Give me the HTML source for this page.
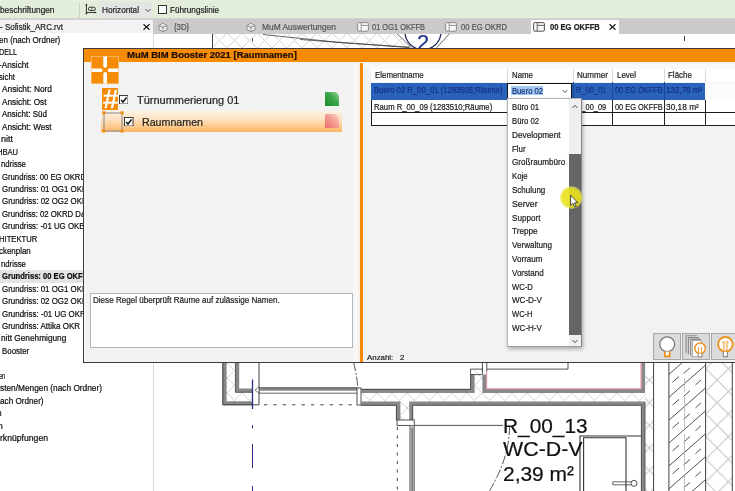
<!DOCTYPE html><html><head><meta charset="utf-8"><title>MuM BIM Booster 2021</title><style>
html,body{margin:0;padding:0}html{width:735px;height:491px;overflow:hidden}#clip{position:absolute;left:0;top:0;width:735px;height:491px;overflow:hidden}body{width:735px;height:491px;overflow:hidden;background:#fff;position:relative;font-family:"Liberation Sans",sans-serif}
.t{position:absolute;white-space:nowrap;transform-origin:0 50%;display:block;-webkit-text-stroke:0.2px currentColor}
#all{position:absolute;left:0;top:0;width:735px;height:491px;filter:blur(0.45px)}
</style></head><body><div id="clip"><div id="all">
<svg style="position:absolute;left:0;top:0" width="745" height="501" viewBox="0 0 745 501">
<defs>
<pattern id="xh" width="22.6" height="22.6" patternUnits="userSpaceOnUse" x="16.5" y="18.5">
<path d="M0 0L22.6 22.6M22.6 0L0 22.6" stroke="#c4c4c4" stroke-width="1" fill="none"/></pattern>
<pattern id="xh2" width="15" height="15" patternUnits="userSpaceOnUse" x="2" y="3">
<path d="M0 0L15 15M15 0L0 15" stroke="#d0d0d0" stroke-width="0.9" fill="none"/></pattern>
<clipPath id="ct"><rect x="153" y="33.5" width="582" height="16"/></clipPath>
<clipPath id="cc"><rect x="669" y="362" width="36.6" height="140"/></clipPath>
</defs>
<g clip-path="url(#ct)">
<path d="M212.5 33.5H396.9L411.5 47.8H212.5Z" fill="url(#xh2)"/>
<path d="M212.5 33V48" stroke="#404040" stroke-width="1" fill="none"/>
<path d="M263 34.5L340 42.5L409.4 47.2M300 39.5L380 45.4L409.4 47.6" stroke="#404040" stroke-width="0.8" fill="none"/>
<path d="M252.5 38.5V41.5M684.5 35.8V41" stroke="#404040" stroke-width="1" fill="none"/>
<path d="M396.9 33.5L411.5 47.8M449.6 33.5L436.6 47.8" stroke="#404040" stroke-width="0.8" fill="none"/>
<circle cx="423" cy="31.8" r="18" fill="none" stroke="#222c5c" stroke-width="1.3"/>
</g>
<rect x="223" y="362" width="13" height="43" fill="url(#xh2)"/>
<rect x="236" y="392" width="17" height="13" fill="url(#xh2)"/>
<rect x="361" y="392.5" width="285" height="10" fill="url(#xh2)"/>
<rect x="474" y="370" width="9" height="22" fill="url(#xh2)"/>
<rect x="400" y="402" width="10" height="18" fill="url(#xh2)"/>
<rect x="645" y="362" width="8.6" height="140" fill="url(#xh)"/>
<rect x="705.6" y="362" width="26.7" height="140" fill="url(#xh)"/>
<path d="M224.6 362V403.2H252.5" stroke="#888888" stroke-width="4" fill="none"/>
<path d="M222.8 362V404.8H259V362" stroke="#404040" stroke-width="1" fill="none"/>
<path d="M237.3 362V390.4H252.5" stroke="#888888" stroke-width="3.8" fill="none"/>
<path d="M235.4 362V392.3H253" stroke="#404040" stroke-width="0.8" fill="none"/>
<path d="M259 389.3H357" stroke="#888888" stroke-width="3" fill="none"/>
<path d="M259 387.7H357M259 393.2H357" stroke="#404040" stroke-width="0.8" fill="none"/>
<path d="M255 390l4 -3v6z" fill="#fff" stroke="#404040" stroke-width="0.7"/>
<path d="M252.5 379.5V409" stroke="#2a2a90" stroke-width="1.3" fill="none"/>
<path d="M252.5 425V428.5M252.5 444V468M252.5 486V501" stroke="#2a2a90" stroke-width="1" fill="none"/>
<path d="M264 404.8H357" stroke="#404040" stroke-width="1" stroke-dasharray="3.2 6.2" fill="none"/>
<path d="M353.5 362Q357 376 357.8 388" stroke="#404040" stroke-width="0.9" stroke-dasharray="9 2 2 2" fill="none"/>
<rect x="357" y="388" width="4" height="17" fill="#fff" stroke="#404040" stroke-width="0.9"/>
<path d="M361 391H472.6V374.6" stroke="#888888" stroke-width="4" fill="none"/>
<path d="M361 389.3H470.6V369.1H482.4V374.6H470.6" stroke="#404040" stroke-width="0.9" fill="none"/>
<path d="M361 403.4H398.4V420" stroke="#888888" stroke-width="4" fill="none"/>
<path d="M411 420V403.4H643.2V501" stroke="#888888" stroke-width="3.6" fill="none"/>
<path d="M361 405.3H396.4V420.6M412.7 420.6V405.3H641.4V501" stroke="#404040" stroke-width="0.9" fill="none"/>
<path d="M645 401.8V501" stroke="#404040" stroke-width="0.8" fill="none"/>
<path d="M484.3 374.6V391H643.2V362" stroke="#888888" stroke-width="3.8" fill="none"/>
<path d="M486.6 371V388.8H641V362" stroke="#e8939e" stroke-width="1.1" fill="none"/>
<path d="M482.4 362V371.3M486.8 362V371.3" stroke="#404040" stroke-width="0.9" fill="none"/>
<path d="M486.8 369.1H568V362" stroke="#404040" stroke-width="0.9" fill="none"/>
<rect x="397.1" y="420" width="17.2" height="5.4" fill="#fff" stroke="#404040" stroke-width="0.9"/>
<path d="M412.1 425.6V501" stroke="#bdbdbd" stroke-width="3.6" fill="none"/>
<path d="M409.9 425.6V501M412.1 428V501M414.3 425.6V501" stroke="#404040" stroke-width="0.8" fill="none"/>
<path d="M414.3 425.4H503" stroke="#404040" stroke-width="0.9" fill="none"/>
<path d="M397.3 427V501" stroke="#404040" stroke-width="1" stroke-dasharray="3 5.5" fill="none"/>
<path d="M509.6 426Q509.6 462 483 501" stroke="#404040" stroke-width="0.9" stroke-dasharray="9 2 2 2" fill="none"/>
<path d="M580 501V436H641.6M583.6 501V437.8H626V501" stroke="#333" stroke-width="1.1" fill="none"/>
<path d="M612.8 481.8H631M612.8 484.8H631M612.8 481.8V484.8" stroke="#404040" stroke-width="0.8" fill="none"/>
<circle cx="634" cy="483.3" r="3" fill="#fff" stroke="#404040" stroke-width="0.9"/>
<path d="M653.6 362V501M668.9 362V501M705.6 362V501M732.3 362V501" stroke="#404040" stroke-width="1" fill="none"/>
<g clip-path="url(#cc)"><path d="M669 351.4L705.6 319.2M669 374.3L705.6 342.1M669 397.2L705.6 365.0M669 420.1L705.6 387.9M669 443.0L705.6 410.8M669 465.9L705.6 433.7M669 488.8L705.6 456.6M669 511.7L705.6 479.5M669 534.6L705.6 502.4" stroke="#404040" stroke-width="0.9" fill="none"/>
<path d="M672.5 359.3L679 353.6M683.6 350.6L690 344.9M695.5 339.1L701 334.2M672.5 382.2L679 376.5M683.6 373.5L690 367.8M695.5 362.0L701 357.1M672.5 405.1L679 399.4M683.6 396.4L690 390.7M695.5 384.9L701 380.0M672.5 428.0L679 422.3M683.6 419.3L690 413.6M695.5 407.8L701 402.9M672.5 450.9L679 445.2M683.6 442.2L690 436.5M695.5 430.7L701 425.8M672.5 473.8L679 468.1M683.6 465.1L690 459.4M695.5 453.6L701 448.7M672.5 496.7L679 491.0M683.6 488.0L690 482.3M695.5 476.5L701 471.6M672.5 519.6L679 513.9M683.6 510.9L690 505.2M695.5 499.4L701 494.5M672.5 542.5L679 536.8M683.6 533.8L690 528.1M695.5 522.3L701 517.4" stroke="#404040" stroke-width="0.9" fill="none"/>
<path d="M684.5 378V392M684.5 397V428M684.5 434V470M684.5 476V501" stroke="#b8b8c0" stroke-width="0.9" fill="none"/></g>
</svg>
<span class="t" style="left:502.60px;top:414.40px;font-size:20px;line-height:24.00px;color:#111;transform:scaleX(1.0420);">R_00_13</span>
<span class="t" style="left:502.80px;top:436.90px;font-size:20px;line-height:24.00px;color:#111;transform:scaleX(1.0694);">WC-D-V</span>
<span class="t" style="left:502.60px;top:461.90px;font-size:20px;line-height:24.00px;color:#111;transform:scaleX(1.0470);">2,39 m²</span>
<span class="t" style="left:416.60px;top:30.30px;font-size:22px;line-height:26.40px;color:#1c2f8c;transform:scaleX(0.9959);clip-path:inset(3px 0 0 0);">2</span>
<div style="position:absolute;left:-6.00px;top:19.50px;width:160.00px;height:481.50px;background:#fff;border-right:1.4px solid #d9d9d9;box-sizing:border-box;"></div>
<div style="position:absolute;left:-6.00px;top:270.20px;width:158.00px;height:12.60px;background:#e4e4e4;"></div>
<span class="t" style="left:-1.00px;top:35.62px;font-size:8.3px;line-height:9.96px;color:#0c0c0c;transform:scaleX(0.9701);">en (nach Ordner)</span>
<span class="t" style="left:-1.40px;top:48.07px;font-size:8.3px;line-height:9.96px;color:#0c0c0c;transform:scaleX(0.8668);">DELL</span>
<span class="t" style="left:-0.80px;top:60.52px;font-size:8.3px;line-height:9.96px;color:#0c0c0c;transform:scaleX(0.9872);">-Ansicht</span>
<span class="t" style="left:-1.00px;top:72.97px;font-size:8.3px;line-height:9.96px;color:#0c0c0c;transform:scaleX(0.9260);">sicht</span>
<span class="t" style="left:1.50px;top:85.42px;font-size:8.3px;line-height:9.96px;color:#0c0c0c;transform:scaleX(1.0038);">Ansicht: Nord</span>
<span class="t" style="left:1.50px;top:97.87px;font-size:8.3px;line-height:9.96px;color:#0c0c0c;transform:scaleX(0.9948);">Ansicht: Ost</span>
<span class="t" style="left:1.50px;top:110.32px;font-size:8.3px;line-height:9.96px;color:#0c0c0c;transform:scaleX(0.9658);">Ansicht: Süd</span>
<span class="t" style="left:1.50px;top:122.77px;font-size:8.3px;line-height:9.96px;color:#0c0c0c;transform:scaleX(0.9787);">Ansicht: West</span>
<span class="t" style="left:1.10px;top:135.22px;font-size:8.3px;line-height:9.96px;color:#0c0c0c;transform:scaleX(1.0742);">nitt</span>
<span class="t" style="left:-3.40px;top:147.67px;font-size:8.3px;line-height:9.96px;color:#0c0c0c;transform:scaleX(0.9149);">HBAU</span>
<span class="t" style="left:1.10px;top:160.12px;font-size:8.3px;line-height:9.96px;color:#0c0c0c;transform:scaleX(0.9308);">ndrisse</span>
<span class="t" style="left:1.50px;top:172.57px;font-size:8.3px;line-height:9.96px;color:#0c0c0c;transform:scaleX(0.9295);">Grundriss: 00 EG OKRD</span>
<span class="t" style="left:1.50px;top:185.02px;font-size:8.3px;line-height:9.96px;color:#0c0c0c;transform:scaleX(0.9529);">Grundriss: 01 OG1 OKFFB</span>
<span class="t" style="left:1.50px;top:197.47px;font-size:8.3px;line-height:9.96px;color:#0c0c0c;transform:scaleX(0.9529);">Grundriss: 02 OG2 OKFFB</span>
<span class="t" style="left:1.50px;top:209.92px;font-size:8.3px;line-height:9.96px;color:#0c0c0c;transform:scaleX(0.9359);">Grundriss: 02 OKRD Dach</span>
<span class="t" style="left:1.50px;top:222.37px;font-size:8.3px;line-height:9.96px;color:#0c0c0c;transform:scaleX(0.9466);">Grundriss: -01 UG OKB</span>
<span class="t" style="left:-1.20px;top:234.82px;font-size:8.3px;line-height:9.96px;color:#0c0c0c;transform:scaleX(0.9205);">HITEKTUR</span>
<span class="t" style="left:-1.20px;top:247.27px;font-size:8.3px;line-height:9.96px;color:#0c0c0c;transform:scaleX(0.9543);">ckenplan</span>
<span class="t" style="left:1.10px;top:259.72px;font-size:8.3px;line-height:9.96px;color:#0c0c0c;transform:scaleX(0.9308);">ndrisse</span>
<span class="t" style="left:1.50px;top:272.17px;font-size:8.3px;line-height:9.96px;color:#0c0c0c;font-weight:bold;transform:scaleX(0.9170);">Grundriss: 00 EG OKFFB</span>
<span class="t" style="left:1.50px;top:284.62px;font-size:8.3px;line-height:9.96px;color:#0c0c0c;transform:scaleX(0.9529);">Grundriss: 01 OG1 OKFFB</span>
<span class="t" style="left:1.50px;top:297.07px;font-size:8.3px;line-height:9.96px;color:#0c0c0c;transform:scaleX(0.9529);">Grundriss: 02 OG2 OKFFB</span>
<span class="t" style="left:1.50px;top:309.52px;font-size:8.3px;line-height:9.96px;color:#0c0c0c;transform:scaleX(0.9563);">Grundriss: -01 UG OKRD</span>
<span class="t" style="left:1.50px;top:321.97px;font-size:8.3px;line-height:9.96px;color:#0c0c0c;transform:scaleX(0.9611);">Grundriss: Attika OKR</span>
<span class="t" style="left:1.10px;top:334.42px;font-size:8.3px;line-height:9.96px;color:#0c0c0c;transform:scaleX(0.9969);">nitt Genehmigung</span>
<span class="t" style="left:2.20px;top:346.87px;font-size:8.3px;line-height:9.96px;color:#0c0c0c;transform:scaleX(0.9513);">Booster</span>
<span class="t" style="left:-0.60px;top:371.77px;font-size:8.3px;line-height:9.96px;color:#0c0c0c;transform:scaleX(0.6714);">en</span>
<span class="t" style="left:0.00px;top:384.22px;font-size:8.3px;line-height:9.96px;color:#0c0c0c;transform:scaleX(1.0008);">sten/Mengen (nach Ordner)</span>
<span class="t" style="left:0.00px;top:396.67px;font-size:8.3px;line-height:9.96px;color:#0c0c0c;transform:scaleX(0.9846);">ach Ordner)</span>
<span class="t" style="left:-2.60px;top:409.12px;font-size:8.3px;line-height:9.96px;color:#0c0c0c;transform:scaleX(0.9946);">n</span>
<span class="t" style="left:-2.40px;top:421.57px;font-size:8.3px;line-height:9.96px;color:#0c0c0c;transform:scaleX(1.0378);">n</span>
<span class="t" style="left:0.00px;top:434.02px;font-size:8.3px;line-height:9.96px;color:#0c0c0c;transform:scaleX(1.0403);">rknüpfungen</span>
<div style="position:absolute;left:-6.00px;top:-6.00px;width:750.00px;height:26.00px;background:#d2d2d2;"></div>
<div style="position:absolute;left:-6.00px;top:-6.00px;width:750.00px;height:24.30px;background:#e3eeda;"></div>
<div style="position:absolute;left:-6.00px;top:-6.00px;width:750.00px;height:7.40px;background:#e8eee3;"></div>
<div style="position:absolute;left:-6.00px;top:19.80px;width:159.00px;height:13.30px;background:#f2f2f2;"></div>
<div style="position:absolute;left:153.00px;top:19.00px;width:592.00px;height:14.50px;background:#cbcbcb;"></div>
<div style="position:absolute;left:531.00px;top:19.60px;width:88.40px;height:14.40px;background:#fff;"></div>
<div style="position:absolute;left:79.00px;top:3.00px;width:1.00px;height:15.00px;background:#c9d2c2;"></div>
<div style="position:absolute;left:99.20px;top:1.90px;width:52.90px;height:15.30px;background:#e3e6e3;"></div>
<svg style="position:absolute;left:84px;top:2px" width="14" height="14" viewBox="0 0 14 14"><path d="M2.4 2.4V11.8M2.4 10.5H12" stroke="#222" stroke-width="0.9" fill="none"/><path d="M1.3 3.6L2.4 1.6L3.5 3.6ZM1.3 10.9L2.4 12.8L3.5 10.9ZM10.8 9.4L12.8 10.5L10.8 11.6Z" fill="#222"/><rect x="4.4" y="5.2" width="7" height="3.3" rx="1.65" fill="none" stroke="#222" stroke-width="0.9"/><path d="M7.9 5.2V8.5" stroke="#222" stroke-width="0.7"/></svg>
<svg style="position:absolute;left:144.5px;top:7.5px" width="6" height="5" viewBox="0 0 6 5"><path d="M0.5 1L3 3.7L5.5 1" stroke="#444" stroke-width="0.9" fill="none"/></svg>
<div style="position:absolute;left:158.20px;top:5.30px;width:8.80px;height:9.00px;background:#fff;border:1px solid #333;box-sizing:border-box;"></div>
<svg style="position:absolute;left:142.5px;top:23.8px" width="7" height="6" viewBox="0 0 7 6"><path d="M0.5 0.3L6.5 5.7M6.5 0.3L0.5 5.7" stroke="#111" stroke-width="1.2" fill="none"/></svg>
<svg style="position:absolute;left:608.7px;top:23.8px" width="7" height="6" viewBox="0 0 7 6"><path d="M0.5 0.3L6.5 5.7M6.5 0.3L0.5 5.7" stroke="#111" stroke-width="1.2" fill="none"/></svg>
<svg style="position:absolute;left:158px;top:21.7px" width="10" height="10" viewBox="0 0 10 10"><path d="M1 3.5L5 1L9 3.5V8L5 9.5L1 8ZM1 3.5L5 5.5L9 3.5M5 5.5V9.5" fill="#eee" stroke="#8a8a8a" stroke-width="0.9"/></svg>
<svg style="position:absolute;left:246px;top:21.7px" width="10" height="10" viewBox="0 0 10 10"><path d="M1 3.5L5 1L9 3.5V8L5 9.5L1 8ZM1 3.5L5 5.5L9 3.5M5 5.5V9.5" fill="#eee" stroke="#8a8a8a" stroke-width="0.9"/></svg>
<svg style="position:absolute;left:356.8px;top:22.0px" width="12" height="10" viewBox="0 0 12 10"><rect x="0.6" y="0.6" width="10.8" height="8.6" rx="1.2" fill="#f6f6f6" stroke="#8a8a8a" stroke-width="1"/><path d="M4.2 3.4H11.4M4.2 0.6V9.2" fill="none" stroke="#8a8a8a" stroke-width="0.9"/></svg>
<svg style="position:absolute;left:444.9px;top:22.0px" width="12" height="10" viewBox="0 0 12 10"><rect x="0.6" y="0.6" width="10.8" height="8.6" rx="1.2" fill="#f6f6f6" stroke="#8a8a8a" stroke-width="1"/><path d="M4.2 3.4H11.4M4.2 0.6V9.2" fill="none" stroke="#8a8a8a" stroke-width="0.9"/></svg>
<svg style="position:absolute;left:533.0px;top:22.0px" width="12" height="10" viewBox="0 0 12 10"><rect x="0.6" y="0.6" width="10.8" height="8.6" rx="1.2" fill="#f6f6f6" stroke="#555" stroke-width="1"/><path d="M4.2 3.4H11.4M4.2 0.6V9.2" fill="none" stroke="#555" stroke-width="0.9"/></svg>
<span class="t" style="left:0.00px;top:5.98px;font-size:8.2px;line-height:9.84px;color:#222;transform:scaleX(1.0145);">beschriftungen</span>
<span class="t" style="left:102.20px;top:5.88px;font-size:8.2px;line-height:9.84px;color:#222;transform:scaleX(1.0034);">Horizontal</span>
<span class="t" style="left:169.70px;top:5.88px;font-size:8.2px;line-height:9.84px;color:#222;transform:scaleX(0.9989);">Führungslinie</span>
<span class="t" style="left:0.00px;top:22.98px;font-size:8.2px;line-height:9.84px;color:#222;transform:scaleX(0.9751);">- Sofistik_ARC.rvt</span>
<span class="t" style="left:173.50px;top:22.58px;font-size:8.2px;line-height:9.84px;color:#555;transform:scaleX(0.9537);">{3D}</span>
<span class="t" style="left:262.00px;top:22.58px;font-size:8.2px;line-height:9.84px;color:#555;transform:scaleX(1.0225);">MuM Auswertungen</span>
<span class="t" style="left:372.00px;top:22.58px;font-size:8.2px;line-height:9.84px;color:#555;transform:scaleX(0.9099);">01 OG1 OKFFB</span>
<span class="t" style="left:461.00px;top:22.58px;font-size:8.2px;line-height:9.84px;color:#555;transform:scaleX(0.9358);">00 EG OKRD</span>
<span class="t" style="left:550.00px;top:22.58px;font-size:8.2px;line-height:9.84px;color:#222;font-weight:bold;transform:scaleX(0.9276);">00 EG OKFFB</span>
<div style="position:absolute;left:82.70px;top:47.90px;width:660.00px;height:314.80px;background:#f2f2f3;border:1px solid #3c3c3c;box-sizing:border-box;"></div>
<div style="position:absolute;left:83.60px;top:48.80px;width:652.00px;height:13.70px;background:#f68c06;"></div>
<div style="position:absolute;left:83.60px;top:62.50px;width:2.00px;height:299.30px;background:#f6f6f6;"></div>
<div style="position:absolute;left:352.60px;top:62.50px;width:5.20px;height:299.30px;background:#f7f7f7;"></div>
<div style="position:absolute;left:357.60px;top:62.50px;width:2.50px;height:299.30px;background:#f7eee6;"></div>
<div style="position:absolute;left:360.10px;top:62.50px;width:3.10px;height:299.30px;background:#f68c06;"></div>
<svg style="position:absolute;left:90.8px;top:55.9px" width="28" height="28" viewBox="-0.5 -0.5 28 28"><rect x="-0.5" y="-0.5" width="28" height="28" fill="#fbd9b0"/><rect width="27" height="27" fill="#f68c06"/><path d="M11.8 0H15.5V9.6Q15.5 11.4 13.65 11.4Q11.8 11.4 11.8 9.6ZM11.8 27H15.5V17.4Q15.5 15.6 13.65 15.6Q11.8 15.6 11.8 17.4ZM0 11.9V15.5H9.4Q11.2 15.5 11.2 13.7Q11.2 11.9 9.4 11.9ZM27 11.9V15.5H17.9Q16.1 15.5 16.1 13.7Q16.1 11.9 17.9 11.9Z" fill="#fff"/></svg>
<div style="position:absolute;left:101.50px;top:88.20px;width:16.80px;height:21.90px;background:#f68c06;"></div>
<span style="position:absolute;left:101.5px;top:86.5px;width:17px;text-align:center;font-size:25px;line-height:25px;color:#fff;font-style:italic;transform:scaleX(1.1);-webkit-text-stroke:0.5px #fff;font-family:'Liberation Sans',sans-serif">#</span>
<svg style="position:absolute;left:118.90px;top:94.60px" width="9.5" height="9.5" viewBox="0 0 10 10"><rect x="0.5" y="0.5" width="9" height="9" fill="#fff" stroke="#333" stroke-width="1"/><path d="M2.2 5.2L4.2 7.4L7.9 2.6" fill="none" stroke="#111" stroke-width="1.5"/></svg>
<div style="position:absolute;left:101.00px;top:110.60px;width:241.00px;height:21.60px;background:linear-gradient(#fff3e4 0%,#fde2c0 40%,#fcc98a 75%,#fbb562 100%);"></div>
<svg style="position:absolute;left:101.5px;top:110.6px" width="22" height="22" viewBox="0 0 22 22"><rect x="2" y="2" width="18" height="18" fill="none" stroke="#9a989a" stroke-width="1.2"/><rect x="0.3" y="0.3" width="3" height="3" fill="#f68c06"/><rect x="18.6" y="0.3" width="3" height="3" fill="#f68c06"/><rect x="0.3" y="18.6" width="3" height="3" fill="#f68c06"/><rect x="18.6" y="18.6" width="3" height="3" fill="#f68c06"/></svg>
<svg style="position:absolute;left:124.30px;top:116.80px" width="9.5" height="9.5" viewBox="0 0 10 10"><rect x="0.5" y="0.5" width="9" height="9" fill="#fff" stroke="#333" stroke-width="1"/><path d="M2.2 5.2L4.2 7.4L7.9 2.6" fill="none" stroke="#111" stroke-width="1.5"/></svg>
<div style="position:absolute;left:324.90px;top:92.30px;width:14.10px;height:13.70px;background:linear-gradient(225deg,#9ad49a,#3aa648 45%,#1c8a2c);border-radius:0 5px 0 0;"></div>
<div style="position:absolute;left:324.90px;top:114.30px;width:14.10px;height:13.80px;background:linear-gradient(225deg,#fbd6cc,#f59a90 50%,#ee6c6c);border-radius:0 5px 0 0;"></div>
<div style="position:absolute;left:89.90px;top:293.20px;width:263.20px;height:55.20px;background:#fff;border:1px solid #b4b4bc;box-sizing:border-box;"></div>
<div style="position:absolute;left:363.40px;top:62.50px;width:380.00px;height:6.70px;background:#f8f8f8;"></div>
<div style="position:absolute;left:370.70px;top:69.20px;width:375.00px;height:13.00px;background:#fff;"></div>
<div style="position:absolute;left:507.00px;top:69.20px;width:1.00px;height:13.00px;background:#dadada;"></div>
<div style="position:absolute;left:572.90px;top:69.20px;width:1.00px;height:13.00px;background:#dadada;"></div>
<div style="position:absolute;left:611.70px;top:69.20px;width:1.00px;height:13.00px;background:#dadada;"></div>
<div style="position:absolute;left:663.90px;top:69.20px;width:1.00px;height:13.00px;background:#dadada;"></div>
<div style="position:absolute;left:704.70px;top:69.20px;width:1.00px;height:13.00px;background:#dadada;"></div>
<div style="position:absolute;left:370.70px;top:82.50px;width:334.80px;height:17.20px;background:#2a61ba;"></div>
<div style="position:absolute;left:572.90px;top:82.20px;width:1.00px;height:17.30px;background:#1d4794;"></div>
<div style="position:absolute;left:611.70px;top:82.20px;width:1.00px;height:17.30px;background:#1d4794;"></div>
<div style="position:absolute;left:663.90px;top:82.20px;width:1.00px;height:17.30px;background:#1d4794;"></div>
<div style="position:absolute;left:705.00px;top:82.50px;width:31.00px;height:17.20px;background:#fbfbfb;"></div>
<div style="position:absolute;left:370.70px;top:99.60px;width:370.00px;height:26.20px;background:#fff;border:1px solid #1c1c1c;border-top:none;border-bottom-width:1.3px;box-sizing:border-box;"></div>
<div style="position:absolute;left:370.70px;top:112.10px;width:375.00px;height:1.00px;background:#1c1c1c;"></div>
<div style="position:absolute;left:507.00px;top:99.50px;width:1.00px;height:26.00px;background:#222;"></div>
<div style="position:absolute;left:572.90px;top:99.50px;width:1.00px;height:26.00px;background:#222;"></div>
<div style="position:absolute;left:611.70px;top:99.50px;width:1.00px;height:26.00px;background:#222;"></div>
<div style="position:absolute;left:663.90px;top:99.50px;width:1.00px;height:26.00px;background:#222;"></div>
<div style="position:absolute;left:704.90px;top:99.50px;width:1.00px;height:26.00px;background:#222;"></div>
<span class="t" style="left:126.60px;top:50.44px;font-size:8.6px;line-height:10.32px;color:#1d0c00;font-weight:bold;transform:scaleX(1.1043);">MuM BIM Booster 2021 [Raumnamen]</span>
<span class="t" style="left:136.60px;top:94.24px;font-size:10.6px;line-height:12.72px;color:#222;transform:scaleX(1.0352);">Türnummerierung 01</span>
<span class="t" style="left:142.00px;top:116.04px;font-size:10.6px;line-height:12.72px;color:#222;transform:scaleX(1.0057);">Raumnamen</span>
<span class="t" style="left:93.30px;top:296.28px;font-size:8.2px;line-height:9.84px;color:#222;transform:scaleX(0.9861);">Diese Regel überprüft Räume auf zulässige Namen.</span>
<span class="t" style="left:367.00px;top:353.40px;font-size:8px;line-height:9.60px;color:#222;transform:scaleX(0.9855);">Anzahl:</span>
<span class="t" style="left:400.40px;top:353.40px;font-size:8px;line-height:9.60px;color:#222;transform:scaleX(0.9881);">2</span>
<span class="t" style="left:375.30px;top:70.14px;font-size:8.6px;line-height:10.32px;color:#222;transform:scaleX(0.9183);">Elementname</span>
<span class="t" style="left:511.50px;top:70.14px;font-size:8.6px;line-height:10.32px;color:#222;transform:scaleX(0.9155);">Name</span>
<span class="t" style="left:577.30px;top:70.14px;font-size:8.6px;line-height:10.32px;color:#222;transform:scaleX(0.9407);">Nummer</span>
<span class="t" style="left:616.50px;top:70.14px;font-size:8.6px;line-height:10.32px;color:#222;transform:scaleX(0.9247);">Level</span>
<span class="t" style="left:667.70px;top:70.14px;font-size:8.6px;line-height:10.32px;color:#222;transform:scaleX(0.9265);">Fläche</span>
<span class="t" style="left:373.50px;top:85.14px;font-size:8.6px;line-height:10.32px;color:#14318a;transform:scaleX(0.8935);">Buero 02 R_00_01 (1283505;Räume)</span>
<span class="t" style="left:575.50px;top:85.14px;font-size:8.6px;line-height:10.32px;color:#14318a;transform:scaleX(0.8656);">R_00_01</span>
<span class="t" style="left:614.80px;top:85.14px;font-size:8.6px;line-height:10.32px;color:#14318a;transform:scaleX(0.8627);">00 EG OKFFB</span>
<span class="t" style="left:666.40px;top:85.14px;font-size:8.6px;line-height:10.32px;color:#14318a;transform:scaleX(0.9353);">132,78 m²</span>
<span class="t" style="left:373.50px;top:101.94px;font-size:8.6px;line-height:10.32px;color:#1a1a1a;transform:scaleX(0.8964);">Raum R_00_09 (1283510;Räume)</span>
<span class="t" style="left:575.50px;top:101.94px;font-size:8.6px;line-height:10.32px;color:#1a1a1a;transform:scaleX(0.8656);">R_00_09</span>
<span class="t" style="left:614.80px;top:101.94px;font-size:8.6px;line-height:10.32px;color:#1a1a1a;transform:scaleX(0.8627);">00 EG OKFFB</span>
<span class="t" style="left:666.40px;top:101.94px;font-size:8.6px;line-height:10.32px;color:#1a1a1a;transform:scaleX(0.9699);">30,18 m²</span>
<div style="position:absolute;left:507.00px;top:83.00px;width:65.30px;height:15.60px;background:#fff;border:1px solid #111;box-sizing:border-box;"></div>
<div style="position:absolute;left:510.70px;top:85.60px;width:32.60px;height:9.60px;background:#a3c8f0;"></div>
<svg style="position:absolute;left:562px;top:89px" width="6" height="5" viewBox="0 0 6 5"><path d="M0.7 1L3 3.5L5.3 1" stroke="#444" stroke-width="0.9" fill="none"/></svg>
<span class="t" style="left:511.80px;top:85.52px;font-size:8.8px;line-height:10.56px;color:#17307c;transform:scaleX(0.8711);">Buero 02</span>
<div style="position:absolute;left:653.10px;top:333.00px;width:27.50px;height:27.30px;background:#dbdbdb;border:1px solid #a6a6a6;box-sizing:border-box;"></div>
<div style="position:absolute;left:682.30px;top:333.00px;width:27.50px;height:27.30px;background:#dbdbdb;border:1px solid #a6a6a6;box-sizing:border-box;"></div>
<div style="position:absolute;left:711.40px;top:333.00px;width:27.50px;height:27.30px;background:#dbdbdb;border:1px solid #a6a6a6;box-sizing:border-box;"></div>
<svg style="position:absolute;left:653.1px;top:333px" width="82" height="28" viewBox="0 0 82 28"><circle cx="14.2" cy="11.3" r="7.4" fill="#fff" stroke="#777" stroke-width="1.3"/><path d="M11.9 18.6V23.4H16.6V18.6" fill="#fff" stroke="#f68c06" stroke-width="1.6"/><path d="M33.1 19.7V2.7H43.9M35.4 21.2V4.6H46M37.6 22.6V6.4H48" stroke="#8a8a8a" stroke-width="1.1" fill="none"/><rect x="39.4" y="7.7" width="9.4" height="16" fill="#fff" stroke="#9a9a9a" stroke-width="0.8"/><circle cx="47.1" cy="15.4" r="5.3" fill="#fff" stroke="#ea9426" stroke-width="1.5"/><path d="M45.6 14V20.5M48.6 14V20.5" stroke="#ea9426" stroke-width="1" fill="none"/><path d="M45.3 20.6V24H48.9V20.6" stroke="#8a8a8a" stroke-width="1" fill="#fff"/><circle cx="72.4" cy="11.3" r="7.3" fill="#fff" stroke="#ee9220" stroke-width="1.9"/><circle cx="70.6" cy="9.4" r="1" fill="none" stroke="#ee9220" stroke-width="0.8"/><circle cx="74.2" cy="9.4" r="1" fill="none" stroke="#ee9220" stroke-width="0.8"/><path d="M70.9 10.4V18.6M73.9 10.4V18.6" stroke="#ee9220" stroke-width="1" fill="none"/><path d="M70.4 18.8V23.6H74.4V18.8" stroke="#8a8a8a" stroke-width="1.1" fill="#fff"/></svg>
<div style="position:absolute;left:507.30px;top:98.40px;width:74.90px;height:248.60px;background:#fff;border:1px solid #b4b4b4;border-right:1.5px solid #858585;border-bottom:1.3px solid #9c9c9c;box-sizing:border-box;box-shadow:1px 2px 4px rgba(0,0,0,0.3);"></div>
<div style="position:absolute;left:568.90px;top:99.40px;width:11.80px;height:246.20px;background:#efefef;"></div>
<div style="position:absolute;left:568.90px;top:154.20px;width:11.80px;height:180.40px;background:#656565;"></div>
<svg style="position:absolute;left:571.5px;top:103.5px" width="6" height="5" viewBox="0 0 6 5"><path d="M0.6 4L3 1.3L5.4 4" stroke="#444" stroke-width="0.9" fill="none"/></svg>
<svg style="position:absolute;left:571.5px;top:339px" width="6" height="5" viewBox="0 0 6 5"><path d="M0.6 1L3 3.7L5.4 1" stroke="#444" stroke-width="0.9" fill="none"/></svg>
<span class="t" style="left:512.40px;top:102.12px;font-size:8.8px;line-height:10.56px;color:#1a1a1a;transform:scaleX(0.8795);">Büro 01</span>
<span class="t" style="left:512.40px;top:115.93px;font-size:8.8px;line-height:10.56px;color:#1a1a1a;transform:scaleX(0.8795);">Büro 02</span>
<span class="t" style="left:512.40px;top:129.74px;font-size:8.8px;line-height:10.56px;color:#1a1a1a;transform:scaleX(0.9374);">Development</span>
<span class="t" style="left:512.40px;top:143.55px;font-size:8.8px;line-height:10.56px;color:#1a1a1a;transform:scaleX(0.8973);">Flur</span>
<span class="t" style="left:512.40px;top:157.36px;font-size:8.8px;line-height:10.56px;color:#1a1a1a;transform:scaleX(0.9222);">Großraumbüro</span>
<span class="t" style="left:512.40px;top:171.17px;font-size:8.8px;line-height:10.56px;color:#1a1a1a;transform:scaleX(0.8859);">Koje</span>
<span class="t" style="left:512.40px;top:184.98px;font-size:8.8px;line-height:10.56px;color:#1a1a1a;transform:scaleX(0.9077);">Schulung</span>
<span class="t" style="left:512.40px;top:198.79px;font-size:8.8px;line-height:10.56px;color:#1a1a1a;transform:scaleX(0.9876);">Server</span>
<span class="t" style="left:512.40px;top:212.60px;font-size:8.8px;line-height:10.56px;color:#1a1a1a;transform:scaleX(0.9282);">Support</span>
<span class="t" style="left:512.40px;top:226.41px;font-size:8.8px;line-height:10.56px;color:#1a1a1a;transform:scaleX(0.9293);">Treppe</span>
<span class="t" style="left:512.40px;top:240.22px;font-size:8.8px;line-height:10.56px;color:#1a1a1a;transform:scaleX(0.9189);">Verwaltung</span>
<span class="t" style="left:512.40px;top:254.03px;font-size:8.8px;line-height:10.56px;color:#1a1a1a;transform:scaleX(0.9203);">Vorraum</span>
<span class="t" style="left:512.40px;top:267.84px;font-size:8.8px;line-height:10.56px;color:#1a1a1a;transform:scaleX(0.9098);">Vorstand</span>
<span class="t" style="left:512.40px;top:281.65px;font-size:8.8px;line-height:10.56px;color:#1a1a1a;transform:scaleX(0.8684);">WC-D</span>
<span class="t" style="left:512.40px;top:295.46px;font-size:8.8px;line-height:10.56px;color:#1a1a1a;transform:scaleX(0.9130);">WC-D-V</span>
<span class="t" style="left:512.40px;top:309.27px;font-size:8.8px;line-height:10.56px;color:#1a1a1a;transform:scaleX(0.8600);">WC-H</span>
<span class="t" style="left:512.40px;top:323.08px;font-size:8.8px;line-height:10.56px;color:#1a1a1a;transform:scaleX(0.9130);">WC-H-V</span>
<svg style="position:absolute;left:556px;top:183px" width="30" height="30" viewBox="0 0 30 30"><defs><radialGradient id="yg"><stop offset="0" stop-color="#e9e11c" stop-opacity="0.95"/><stop offset="0.8" stop-color="#e9e11c" stop-opacity="0.9"/><stop offset="1" stop-color="#ece86a" stop-opacity="0.55"/></radialGradient></defs><circle cx="15.2" cy="14.6" r="11.3" fill="url(#yg)"/><path d="M14.6 12V22.6L17 20.3L18.7 24.1L20.2 23.4L18.5 19.7H21.8Z" fill="#fff" stroke="#222" stroke-width="0.8"/></svg>
</div></div></body></html>
